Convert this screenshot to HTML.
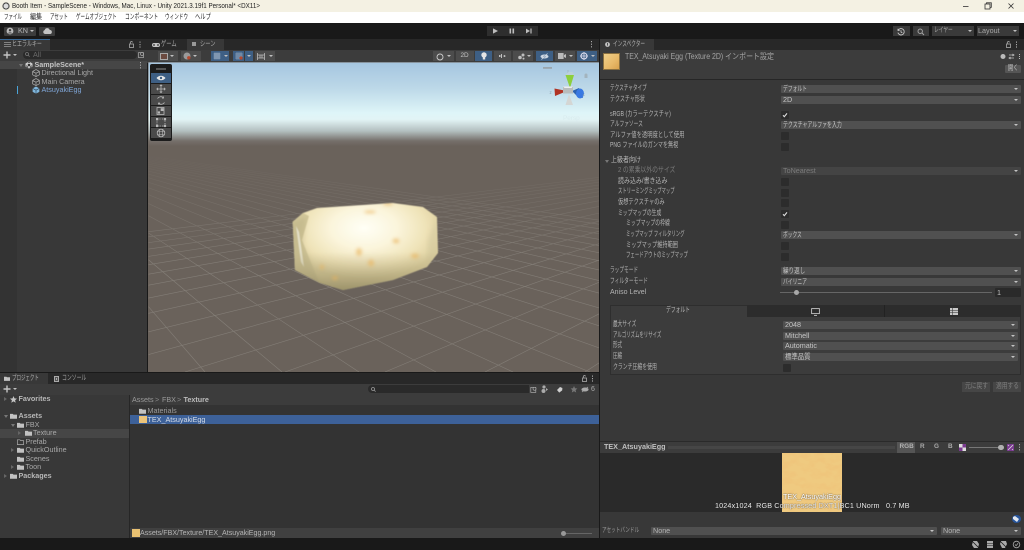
<!DOCTYPE html>
<html><head><meta charset="utf-8"><style>
*{box-sizing:border-box}
html,body{margin:0;padding:0;background:#191919;width:1024px;height:550px;overflow:hidden}
#r{position:relative;width:1024px;height:550px;overflow:hidden;font-family:"Liberation Sans","Noto Sans CJK JP",sans-serif;font-size:7.2px;color:#b4b4b4;filter:blur(.35px)}
.b{position:absolute}
.t{position:absolute;line-height:10px;margin-top:-5px;white-space:nowrap;transform-origin:left center}
.t[style*="scaleX"]{scale:1 1.12}
.j{font-size:6.5px}
.dd{position:absolute;height:8px;background:#505050;border-radius:1px;color:#c6c6c6;line-height:8px;padding-left:2px;white-space:nowrap}
.dd:after{content:"";position:absolute;right:3px;top:3px;border:2px solid transparent;border-top:2.5px solid #c4c4c4;border-bottom:0}
.k{display:inline-block;font-size:6.4px;transform-origin:left center;scale:1 1.12}
.cb{position:absolute;width:8px;height:8px;background:#2c2c2c;border-radius:1px}
.tb{position:absolute;background:#4c4c4c;height:10px;top:51px}
.bl{background:#3e5f84}
.ar{position:absolute;border:2px solid transparent;border-top:2.5px solid #c0c0c0;border-bottom:0}
.tr{position:absolute;border:2.5px solid transparent;border-left:3.5px solid #666;border-right:0}
.td{position:absolute;border:2.5px solid transparent;border-top:3.5px solid #777;border-bottom:0}
.tool{position:absolute;left:151px;width:20px;height:10px;background:#4a4a4a}
svg{position:absolute;overflow:visible}
</style></head><body><div id="r">
<svg width="0" height="0"><defs>
<symbol id="f" viewBox="0 0 10 8"><path d="M0 1h4l1 1h5v6H0z" fill="#c2c2c2"/></symbol>
<symbol id="c" viewBox="0 0 10 10"><path d="M5 .7L9.2 3v4.3L5 9.5.8 7.3V3zM.8 3L5 5.2 9.2 3M5 5.2v4.3" fill="none" stroke="#aaa" stroke-width=".9"/></symbol>
</defs></svg>

<!-- window title / menu -->
<div class="b" style="left:0;top:0;width:1024px;height:12px;background:#f4f1e3"></div>
<div class="b" style="left:0;top:12px;width:1024px;height:10.5px;background:#fff"></div>
<div class="b" style="left:0;top:22.5px;width:1024px;height:.8px;background:#bbb"></div>
<svg style="left:2px;top:2px" width="8" height="8" viewBox="0 0 8 8"><circle cx="4" cy="4" r="3.6" fill="#444"/><path d="M4 1.2L6.4 2.7V5.4L4 6.8 1.6 5.4V2.7z" fill="#ddd"/></svg>
<div class="t" style="left:12px;top:6px;color:#222;font-size:7.1px;transform:scaleX(.885);scale:1 1">Booth Item - SampleScene - Windows, Mac, Linux - Unity 2021.3.19f1 Personal* &lt;DX11&gt;</div>
<div class="t" style="left:3.5px;top:17.5px;color:#222;font-size:6.4px;transform:scaleX(.7)">ファイル</div>
<div class="t" style="left:30px;top:17.5px;color:#222;font-size:6.4px;transform:scaleX(.94)">編集</div>
<div class="t" style="left:50px;top:17.5px;color:#222;font-size:6.4px;transform:scaleX(.7)">アセット</div>
<div class="t" style="left:76px;top:17.5px;color:#222;font-size:6.4px;transform:scaleX(.71)">ゲームオブジェクト</div>
<div class="t" style="left:125px;top:17.5px;color:#222;font-size:6.4px;transform:scaleX(.74)">コンポーネント</div>
<div class="t" style="left:165px;top:17.5px;color:#222;font-size:6.4px;transform:scaleX(.72)">ウィンドウ</div>
<div class="t" style="left:195px;top:17.5px;color:#222;font-size:6.4px;transform:scaleX(.83)">ヘルプ</div>
<svg style="left:960px;top:1px" width="64" height="10" viewBox="0 0 64 10" fill="none" stroke="#333" stroke-width=".8"><path d="M3 5.5h5.5"/><rect x="25" y="3" width="5" height="5"/><path d="M26.5 3V1.8h4.8v4.6H30"/><path d="M48.5 2.5l5 5M53.5 2.5l-5 5"/></svg>

<!-- main toolbar -->
<div class="b" style="left:0;top:23px;width:1024px;height:16px;background:#191919"></div>
<div class="b" style="left:4px;top:26.5px;width:32px;height:9.5px;background:#3c3c3c;border-radius:1px"></div>
<svg style="left:6px;top:27px" width="8" height="8" viewBox="0 0 8 8"><circle cx="4" cy="4" r="3.4" fill="#bbb"/><circle cx="4" cy="3.2" r="1.2" fill="#3c3c3c"/><path d="M1.8 6.4c.6-1.4 3.8-1.4 4.4 0" fill="#3c3c3c"/></svg>
<div class="t" style="left:18px;top:31px;color:#b8b8b8">KN</div>
<div class="ar" style="left:30px;top:30px"></div>
<div class="b" style="left:39px;top:26.5px;width:16px;height:9.5px;background:#3c3c3c;border-radius:1px"></div>
<svg style="left:43px;top:28px" width="9" height="6" viewBox="0 0 9 6"><path d="M2 6a2 2 0 0 1-.3-3.900A2.600 2.600 0 0 1 6.700 2 2 2 0 0 1 7 6z" fill="#c4c4c4"/></svg>

<div class="b" style="left:487px;top:26px;width:16.5px;height:10px;background:#2e2e2e"></div>
<div class="b" style="left:504px;top:26px;width:16.5px;height:10px;background:#2e2e2e"></div>
<div class="b" style="left:521px;top:26px;width:16.5px;height:10px;background:#2e2e2e"></div>
<svg style="left:487px;top:26px" width="50" height="10" viewBox="0 0 50 10" fill="#bdbdbd"><path d="M6 2.4L11 5 6 7.6z"/><rect x="22.5" y="2.5" width="1.6" height="5"/><rect x="25.5" y="2.5" width="1.6" height="5"/><path d="M39 2.6L43 5 39 7.4z"/><rect x="43.4" y="2.5" width="1.2" height="5"/></svg>

<div class="b" style="left:893px;top:26px;width:17px;height:10px;background:#3a3a3a"></div>
<svg style="left:897px;top:27.5px" width="8" height="8" viewBox="0 0 8 8" fill="none" stroke="#c8c8c8" stroke-width=".9"><path d="M1.2 2.2A3.2 3.2 0 1 1 .9 4.6M1 .8v1.6h1.6M4 2.2V4l1.3.9"/></svg>
<div class="b" style="left:913px;top:26px;width:16px;height:10px;background:#3a3a3a"></div>
<svg style="left:917px;top:27.5px" width="8" height="8" viewBox="0 0 8 8" fill="none" stroke="#aaa" stroke-width=".9"><circle cx="3.2" cy="3.2" r="2.2"/><path d="M5 5l2 2"/></svg>
<div class="b" style="left:932px;top:26px;width:42px;height:10px;background:#3a3a3a"></div>
<div class="t" style="left:934px;top:31px;color:#a8a8a8;font-size:6.4px;transform:scaleX(.74)">レイヤー</div>
<div class="ar" style="left:968px;top:30px"></div>
<div class="b" style="left:977px;top:26px;width:42px;height:10px;background:#3a3a3a"></div>
<div class="t" style="left:978px;top:31px;color:#a8a8a8">Layout</div>
<div class="ar" style="left:1013px;top:30px"></div>

<!-- hierarchy -->
<div class="b" style="left:0;top:39px;width:147px;height:10.5px;background:#282828"></div>
<div class="b" style="left:0;top:39px;width:50px;height:10.5px;background:#383838"></div>
<div class="b" style="left:0;top:39px;width:50px;height:.8px;background:#3a6a99"></div>
<div class="b" style="left:0;top:49.5px;width:147px;height:11px;background:#3c3c3c"></div>
<div class="b" style="left:0;top:60.5px;width:147px;height:312px;background:#383838"></div>
<div class="b" style="left:0;top:60.5px;width:17px;height:312px;background:#333"></div>
<div class="b" style="left:0;top:60.5px;width:147px;height:8.5px;background:#464646"></div>
<svg style="left:4px;top:42px" width="7" height="5" viewBox="0 0 7 5" stroke="#999" stroke-width=".8"><path d="M0 .5h7M0 2.5h7M0 4.5h7"/></svg>
<div class="t" style="left:12px;top:44.5px;font-size:6.4px;color:#aaa;transform:scaleX(.78)">ヒエラルキー</div>
<svg style="left:129px;top:41px" width="14" height="7" viewBox="0 0 14 7" fill="none" stroke="#aaa" stroke-width=".8"><rect x="0.5" y="3" width="4" height="3.5"/><path d="M1.3 3V1.6a1.2 1.2 0 0 1 2.3-.3"/><path d="M11 .5v1.2M11 3v1.2M11 5.4v1.2" stroke-width="1"/></svg>
<svg style="left:3px;top:51px" width="8" height="8" viewBox="0 0 8 8" stroke="#c4c4c4" stroke-width="1.4"><path d="M4 .5v7M.5 4h7"/></svg>
<div class="ar" style="left:12.5px;top:53.5px"></div>
<div class="b" style="left:23px;top:50.5px;width:114px;height:8.5px;background:#2a2a2a;border-radius:4px"></div>
<div class="t" style="left:33px;top:55px;color:#6a6a6a">All</div>
<svg style="left:25px;top:52px" width="5" height="5" viewBox="0 0 5 5" fill="none" stroke="#777" stroke-width=".8"><circle cx="2" cy="2" r="1.5"/><path d="M3 3l1.6 1.6"/></svg>
<svg style="left:138px;top:51px" width="7" height="7" viewBox="0 0 7 7" fill="none" stroke="#aaa" stroke-width=".7"><rect x=".5" y="1.6" width="5" height="5"/><circle cx="4" cy="3" r="1.5" fill="#3c3c3c"/></svg>
<div class="td" style="left:19px;top:63.5px"></div>
<svg style="left:25px;top:60.5px" width="8" height="8" viewBox="0 0 8 8"><path d="M4 .5L7.5 2.5V5.5L4 7.5.5 5.5V2.5z" fill="#ccc"/><circle cx="4" cy="4" r="1.3" fill="#333"/><path d="M1.3 4.6L3 6.5M6.7 4.6L5 6.5M3 1.4h2" stroke="#333" stroke-width=".8"/></svg>
<div class="t" style="left:34.5px;top:64.5px;font-weight:bold;color:#c4c4c4;font-size:7.2px">SampleScene*</div>
<svg style="left:139px;top:61.5px" width="3" height="7" fill="#aaa"><rect x="1" y="0" width="1" height="1.2"/><rect x="1" y="2.6" width="1" height="1.2"/><rect x="1" y="5.2" width="1" height="1.2"/></svg>
<svg style="left:32px;top:69px" width="8" height="8"><use href="#c"/></svg>
<svg style="left:32px;top:77.5px" width="8" height="8"><use href="#c"/></svg>
<svg style="left:32px;top:86px" width="8" height="8" viewBox="0 0 10 10"><path d="M5 .7L9.2 3v4.3L5 9.5.8 7.3V3z" fill="#7fb6dc"/><path d="M.8 3L5 5.2 9.2 3M5 5.2v4.3" fill="none" stroke="#234" stroke-width=".7"/></svg>
<div class="t" style="left:41.5px;top:73px;color:#a8a8a8">Directional Light</div>
<div class="t" style="left:41.5px;top:81.5px;color:#a8a8a8">Main Camera</div>
<div class="t" style="left:41.5px;top:90px;color:#7fa5d6">AtsuyakiEgg</div>
<div class="b" style="left:17px;top:86px;width:.9px;height:8px;background:#4aa4d8"></div>

<!-- scene -->
<div class="b" style="left:147px;top:39px;width:453px;height:10.5px;background:#282828"></div>
<div class="b" style="left:187px;top:39px;width:37px;height:10.5px;background:#383838"></div>
<svg style="left:152px;top:42.5px" width="8" height="4" viewBox="0 0 8 4"><rect width="8" height="4" rx="2" fill="#c4c4c4"/><circle cx="2" cy="2" r=".9" fill="#333"/><circle cx="6" cy="2" r=".9" fill="#333"/></svg>
<div class="t" style="left:161px;top:44.5px;font-size:6.4px;color:#aaa;transform:scaleX(.82)">ゲーム</div>
<div class="b" style="left:191.5px;top:41.5px;width:4.5px;height:4.5px;background:#999"></div>
<div class="t" style="left:200px;top:44.5px;font-size:6.4px;color:#aaa;transform:scaleX(.82)">シーン</div>
<svg style="left:590px;top:41px" width="3" height="7" fill="#aaa"><rect x="1" y="0" width="1" height="1.2"/><rect x="1" y="2.6" width="1" height="1.2"/><rect x="1" y="5.2" width="1" height="1.2"/></svg>
<div class="b" style="left:147px;top:49.5px;width:453px;height:13px;background:#3c3c3c"></div>

<div class="tb" style="left:158px;width:20px"></div><div class="b" style="left:160px;top:52.5px;width:7.5px;height:7.5px;background:#6b4a40;border:.8px solid #aaa"></div><div class="ar" style="left:170px;top:55px"></div>
<div class="tb" style="left:181px;width:19.5px"></div><svg style="left:183px;top:52px" width="8" height="8" viewBox="0 0 8 8"><circle cx="4" cy="4" r="3.5" fill="#9a9a9a"/><circle cx="5.8" cy="5.8" r="1.7" fill="#b5482e"/></svg><div class="ar" style="left:193px;top:55px"></div>
<div class="tb bl" style="left:211px;width:10.5px"></div><div class="tb bl" style="left:222px;width:6.5px"></div>
<svg style="left:212.5px;top:52px" width="8" height="8" viewBox="0 0 8 8" stroke="#c8d4e0" stroke-width=".6" fill="none"><path d="M2 .5v7M4 .5v7M6 .5v7M.5 2h7M.5 4h7M.5 6h7"/></svg><div class="ar" style="left:223.5px;top:55px"></div>
<div class="tb bl" style="left:233px;width:11px"></div><div class="tb bl" style="left:245px;width:8px"></div>
<svg style="left:234.5px;top:52px" width="8" height="8" viewBox="0 0 8 8" stroke="#c8d4e0" stroke-width=".7" fill="none" stroke-dasharray="1 1"><path d="M2 .5v7M4 .5v7M6 .5v7M.5 2h7M.5 4h7M.5 6h7"/><circle cx="6" cy="6" r="1.6" fill="#b5482e" stroke="none"/></svg><div class="ar" style="left:247px;top:55px"></div>
<div class="tb" style="left:255px;width:20px"></div><svg style="left:257px;top:52.5px" width="8" height="7" viewBox="0 0 8 7" stroke="#bbb" stroke-width=".8" fill="none"><path d="M.5 0v7M7.5 0v7M.5 2h7M.5 5h7M3 2v3M5 2v3"/></svg><div class="ar" style="left:269px;top:55px"></div>

<div class="tb" style="left:433px;width:21px"></div><svg style="left:436px;top:52.5px" width="8" height="8" viewBox="0 0 8 8" fill="none" stroke="#ccc" stroke-width=".9"><circle cx="4" cy="4" r="3"/></svg><div class="ar" style="left:447px;top:55px"></div>
<div class="tb" style="left:456px;width:17.5px"></div><div class="t" style="left:460.5px;top:56px;font-size:6.4px;color:#c4c4c4">2D</div>
<div class="tb bl" style="left:475px;width:17px"></div><svg style="left:480.5px;top:52px" width="6" height="8" viewBox="0 0 6 8" fill="#e4e4e4"><circle cx="3" cy="3" r="2.7"/><rect x="1.8" y="5.5" width="2.4" height="2"/></svg>
<div class="tb" style="left:494px;width:16.5px"></div><svg style="left:499px;top:53px" width="7" height="6" viewBox="0 0 7 6" fill="#c0c0c0"><path d="M0 2h1.5V4H0zM2 1h1v4H2zM4.500 3a1 1 0 1 1 0 .1z"/></svg>
<div class="tb" style="left:513px;width:20px"></div><svg style="left:518px;top:52.5px" width="7" height="7" viewBox="0 0 7 7" fill="#bdbdbd"><circle cx="2" cy="4.5" r="1.8"/><circle cx="5" cy="2" r="1.5"/><circle cx="5.5" cy="5.6" r="1"/></svg><div class="ar" style="left:527px;top:55px"></div>
<div class="tb bl" style="left:536px;width:17px"></div><svg style="left:540px;top:52.5px" width="9" height="7" viewBox="0 0 9 7" fill="#cfd8e2"><ellipse cx="4.5" cy="3.5" rx="4" ry="2"/><circle cx="4.5" cy="3.5" r="1" fill="#3e5f84"/><path d="M1.5 6.5l6-6" stroke="#cfd8e2" stroke-width=".8"/></svg>
<div class="tb" style="left:555px;width:20px"></div><svg style="left:557.5px;top:53px" width="8" height="6" viewBox="0 0 8 6" fill="#bbb"><rect width="5.6" height="6"/><path d="M6 2l2-1v4L6 4z"/></svg><div class="ar" style="left:568.5px;top:55px"></div>
<div class="tb bl" style="left:577px;width:20px"></div><svg style="left:580px;top:52px" width="8" height="8" viewBox="0 0 8 8"><circle cx="4" cy="4" r="3" fill="none" stroke="#dde" stroke-width="1.1"/><path d="M4 0v8M0 4h8" stroke="#dde" stroke-width=".8"/></svg><div class="ar" style="left:590.5px;top:55px"></div>

<svg style="left:0;top:0" width="1024" height="550" viewBox="0 0 1024 550">
<defs>
<clipPath id="sc"><rect x="148.5" y="62.5" width="451" height="310"/></clipPath>
<linearGradient id="sky" x1="0" y1="63" x2="0" y2="146" gradientUnits="userSpaceOnUse">
<stop offset="0" stop-color="#a6c6e0"/><stop offset=".3" stop-color="#bcd8e8"/><stop offset=".6" stop-color="#def5f8"/><stop offset=".68" stop-color="#e2f4f5"/><stop offset=".82" stop-color="#b3bfbf"/><stop offset=".94" stop-color="#756f6a"/><stop offset="1" stop-color="#6a625b"/></linearGradient>
<linearGradient id="gf" x1="0" y1="150" x2="0" y2="265" gradientUnits="userSpaceOnUse"><stop offset="0" stop-color="#000"/><stop offset="1" stop-color="#fff"/></linearGradient>
<mask id="gm" maskUnits="userSpaceOnUse" x="148" y="140" width="452" height="235"><rect x="148" y="140" width="452" height="235" fill="url(#gf)"/></mask>
<radialGradient id="eg" gradientUnits="userSpaceOnUse" cx="364" cy="228" r="82" gradientTransform="translate(364 228) scale(1 .62) translate(-364 -228)">
<stop offset="0" stop-color="#fffff6"/><stop offset=".4" stop-color="#fbf5dc"/><stop offset=".75" stop-color="#efe3b8"/><stop offset="1" stop-color="#dccf9e"/></radialGradient>
<linearGradient id="eb" x1="0" y1="252" x2="0" y2="292" gradientUnits="userSpaceOnUse"><stop offset="0" stop-color="#b3a67c" stop-opacity="0"/><stop offset="1" stop-color="#8f8760" stop-opacity=".9"/></linearGradient>
<filter id="bl"><feGaussianBlur stdDeviation="1.5"/></filter>
<filter id="bl1"><feGaussianBlur stdDeviation="2"/></filter>
<filter id="bl0"><feGaussianBlur stdDeviation=".6"/></filter>
<clipPath id="ec"><path d="M292.7 221.7L303 213 317 208 393 203 423 207 437 217 438 253 427 267 393 280 343 290 320 283 295 270z"/></clipPath>
</defs>
<rect x="148" y="62" width="452" height="311" fill="#6a625b"/>
<g clip-path="url(#sc)"><g mask="url(#gm)" stroke="#8a857e" stroke-width=".6" fill="none" opacity=".8">
<path d="M950 135L885 372M950 135L785 372M950 135L685 372M950 135L585 372M950 135L485 372M950 135L385 372M950 135L285 372M950 135L185 372M950 135L85 372M950 135L-15 372M950 135L-115 372M950 135L-215 372M950 135L-315 372M950 135L-415 372M950 135L-515 372M950 135L-615 372M950 135L-715 372M950 135L-815 372M950 135L-915 372M950 135L-1015 372"/>
<path d="M0 135L205 372M0 135L282 372M0 135L359 372M0 135L436 372M0 135L513 372M0 135L590 372M0 135L667 372M0 135L744 372M0 135L821 372M0 135L898 372M0 135L975 372M0 135L1052 372M0 135L1129 372M0 135L1206 372M0 135L1283 372M0 135L1360 372M0 135L1437 372M0 135L1514 372M0 135L1591 372M0 135L1668 372M0 135L128 372"/>
</g></g>
<rect x="148.5" y="62.5" width="451" height="84" fill="url(#sky)"/>
<!-- egg -->
<g filter="url(#bl0)"><g clip-path="url(#ec)">
<rect x="288" y="200" width="155" height="95" fill="url(#eg)"/>
<path d="M292 270L292 222 303 213 309 216 302 240 320 285 295 272z" fill="#d2c79a"/>
<path d="M296 226L301 262 304 267 299 232z" fill="#faf8e8"/>
<path d="M306 217L303 245 319 282 336 292 300 292 290 270 291 222z" fill="#a89f72" opacity=".28" filter="url(#bl1)"/>
<path d="M437 217L438 253 427 267 428 240z" fill="#cfc59c" opacity=".45" filter="url(#bl1)"/>
<rect x="290" y="252" width="150" height="42" fill="url(#eb)"/>
<g fill="#eab35c" filter="url(#bl)" opacity=".6">
<ellipse cx="396" cy="241" rx="3.5" ry="2.5"/><ellipse cx="359" cy="252" rx="3" ry="4"/><ellipse cx="371" cy="263" rx="3" ry="3.5"/><ellipse cx="415" cy="256" rx="4" ry="2.5"/><ellipse cx="335" cy="278" rx="3" ry="2"/><ellipse cx="322" cy="267" rx="2" ry="2.5"/><ellipse cx="370" cy="212" rx="6" ry="1.5"/><ellipse cx="388" cy="204" rx="5" ry="1.5"/></g>
</g></g>
<!-- gizmo -->
<rect x="543" y="67" width="9" height="1.8" fill="#9aa5ad"/>
<path d="M584.5 78v-3a1.5 1.5 0 0 1 3 0v3z" fill="#a3b4be"/>
<path d="M565.5 75L574 75 570 88z" fill="#8ccf3c"/><path d="M566 75h8l-1.5-3h-5z" fill="#c6d2d6" opacity=".6"/>
<path d="M554.5 88.5L555 96 567 91z" fill="#b03324"/>
<path d="M572 91L579 88 583 98 578 97z" fill="#2c62b0"/><ellipse cx="580" cy="93.5" rx="4" ry="5" fill="#3878e2"/>
<path d="M565.5 105L573 105 569 94z" fill="#d4d6d4"/>
<rect x="563" y="86.5" width="10" height="7" fill="#b9bcbc"/>
<path d="M563 86.5h10l-1.5 1.5h-7z" fill="#eceeee"/>
<text x="567" y="72" font-size="4" fill="#9fb2bc" font-family="Liberation Sans">y</text>
<text x="582.5" y="96" font-size="4.5" fill="#8aa2ae" font-family="Liberation Sans">x</text>
<text x="549.5" y="94" font-size="4.5" fill="#8aa2ae" font-family="Liberation Sans">z</text>
<text x="563" y="120" font-size="6.4" fill="#d8ebee" font-family="Liberation Sans">Persp</text>
</svg>

<!-- tools overlay -->
<div class="b" style="left:150px;top:64px;width:22px;height:77px;background:#1c1c1c;border-radius:2px"></div>
<div class="b" style="left:156px;top:67.5px;width:10px;height:2px;background:#555"></div>
<div class="tool" style="top:73px;background:#3e5f84"></div>
<div class="tool" style="top:84px"></div><div class="tool" style="top:95px"></div><div class="tool" style="top:106px"></div><div class="tool" style="top:117px"></div><div class="tool" style="top:128px"></div>
<svg style="left:151px;top:73px" width="20" height="66" viewBox="0 0 20 66" fill="none" stroke="#b8b8b8" stroke-width=".8">
<path d="M5.5 5C8 2 12 2 14.5 5 12 8 8 8 5.5 5z" fill="#e8e8e8" stroke="none"/><circle cx="10" cy="5" r="1.2" fill="#3e5f84" stroke="none"/>
<path d="M10 12v7.5M6.2 16h7.6M8.8 13l1.2-1.2 1.2 1.2M8.8 18.5l1.2 1.2 1.2-1.2M7 14.8L5.800 16 7 17.2M13 14.8l1.2 1.2-1.2 1.2"/>
<path d="M6.5 25.5a4 4 0 0 1 6-.8M13.5 29.5a4 4 0 0 1-6 .8M12.5 23.5v1.6H11M7.5 31.5v-1.5H9"/>
<rect x="6" y="34.5" width="7" height="7"/><rect x="9.7" y="35.2" width="2.8" height="2.8" fill="#b8b8b8" stroke="none"/><rect x="6.8" y="38.4" width="2.2" height="2.2" fill="#b8b8b8" stroke="none"/>
<path d="M6 46h8v7H6z" stroke-dasharray="1.2 1.2"/><rect x="5.4" y="45.4" width="1.5" height="1.5" fill="#b8b8b8"/><rect x="13.2" y="45.4" width="1.5" height="1.5" fill="#b8b8b8"/><rect x="5.4" y="52.2" width="1.5" height="1.5" fill="#b8b8b8"/><rect x="13.2" y="52.2" width="1.5" height="1.5" fill="#b8b8b8"/>
<circle cx="10" cy="60" r="3.800"/><path d="M6.200 58.500h7.600M6.200 61.500h7.600M8.500 56.300v7.400M11.500 56.300v7.400" stroke-width=".6"/>
</svg>

<!-- inspector -->
<div class="b" style="left:600px;top:39px;width:424px;height:10.5px;background:#282828"></div>
<div class="b" style="left:600px;top:39px;width:54px;height:10.5px;background:#383838"></div>
<div class="b" style="left:600px;top:49.5px;width:424px;height:29px;background:#3c3c3c"></div>
<div class="b" style="left:600px;top:78.5px;width:424px;height:1px;background:#262626"></div>
<div class="b" style="left:600px;top:79.5px;width:424px;height:361px;background:#383838"></div>
<div class="b" style="left:599px;top:39px;width:1px;height:499px;background:#191919"></div>
<svg style="left:605px;top:41.5px" width="5" height="5" viewBox="0 0 5 5"><circle cx="2.5" cy="2.5" r="2.4" fill="#c4c4c4"/><rect x="2.1" y="1" width=".8" height="2.6" fill="#333"/></svg>
<div class="t" style="left:613px;top:44.5px;font-size:6.4px;color:#b0b0b0;transform:scaleX(.73)">インスペクター</div>
<svg style="left:1006px;top:41px" width="14" height="7" viewBox="0 0 14 7" fill="none" stroke="#aaa" stroke-width=".8"><rect x="0.5" y="3" width="4" height="3.5"/><path d="M1.3 3V1.6a1.2 1.2 0 0 1 2.3-.3"/><path d="M10.5 .5v1.2M10.5 3v1.2M10.5 5.4v1.2" stroke-width="1"/></svg>
<div class="b" style="left:603px;top:53px;width:17px;height:17px;background:linear-gradient(135deg,#f0d08a,#e8b968 60%,#d9a24e);border:.5px solid #8a7040"></div>
<div class="t" style="left:625px;top:56.5px;color:#a4a4a4;font-size:8px;transform:scaleX(.87);scale:1 1">TEX_Atsuyaki Egg (Texture 2D) インポート設定</div>
<svg style="left:1000px;top:52.5px" width="21" height="7" viewBox="0 0 21 7" fill="none" stroke="#bbb" stroke-width=".8"><circle cx="3" cy="3.5" r="2.5" fill="#bbb" stroke="none"/><path d="M9 2h5M12.5 1l1.5 1-1.5 1M14 5H9M10.5 4L9 5l1.5 1"/><path d="M19.5 1v1M19.5 3v1M19.5 5v1" stroke-width="1"/></svg>
<div class="b" style="left:1005px;top:65px;width:16px;height:7.5px;background:#555;border-radius:1px"></div>
<div class="t" style="left:1008px;top:68.7px;font-size:6.4px;color:#c4c4c4;transform:scaleX(.8)">開く</div>

<div class="t j" style="left:610px;top:88.5px;transform:scaleX(.71)">テクスチャタイプ</div><div class="dd" style="left:781px;top:85px;width:240px"><span class="k" style="transform:scaleX(.75)">デフォルト</span></div>
<div class="t j" style="left:610px;top:99.5px;transform:scaleX(.77)">テクスチャ形状</div><div class="dd" style="left:781px;top:96px;width:240px">2D</div>
<div class="t j" style="left:610px;top:114.5px;transform:scaleX(.81)">sRGB (カラーテクスチャ)</div><div class="cb" style="left:780.5px;top:111px"></div>
<svg style="left:780.5px;top:111px" width="8" height="8" viewBox="0 0 8 8" fill="none" stroke="#e0e0e0" stroke-width="1.1"><path d="M2 4.3l1.3 1.4L6 2.4"/></svg>
<div class="t j" style="left:610px;top:125px;transform:scaleX(.73)">アルファソース</div><div class="dd" style="left:781px;top:121px;width:240px"><span class="k" style="transform:scaleX(.77)">テクスチャアルファを入力</span></div>
<div class="t j" style="left:610px;top:135.5px;transform:scaleX(.82)">アルファ値を透明度として使用</div><div class="cb" style="left:780.5px;top:132px"></div>
<div class="t j" style="left:610px;top:146px;transform:scaleX(.78)">PNG ファイルのガンマを無視</div><div class="cb" style="left:780.5px;top:142.5px"></div>

<div class="td" style="left:604.5px;top:159.5px"></div>
<div class="t j" style="left:611px;top:160.5px;color:#bcbcbc;transform:scaleX(.92)">上級者向け</div>
<div class="t j" style="left:618px;top:171px;color:#7c7c7c;transform:scaleX(.9)">2 の累乗以外のサイズ</div><div class="dd" style="left:781px;top:167px;width:240px;background:#444;color:#7c7c7c">ToNearest</div>
<div class="t j" style="left:618px;top:181.5px;transform:scaleX(.92)">読み込み/書き込み</div><div class="cb" style="left:780.5px;top:178px"></div>
<div class="t j" style="left:618px;top:192px;transform:scaleX(.67)">ストリーミングミップマップ</div><div class="cb" style="left:780.5px;top:188.5px"></div>
<div class="t j" style="left:618px;top:203px;transform:scaleX(.8)">仮想テクスチャのみ</div><div class="cb" style="left:780.5px;top:199px"></div>
<div class="t j" style="left:618px;top:213.5px;transform:scaleX(.74)">ミップマップの生成</div><div class="cb" style="left:780.5px;top:210px"></div>
<svg style="left:780.5px;top:210px" width="8" height="8" viewBox="0 0 8 8" fill="none" stroke="#e0e0e0" stroke-width="1.1"><path d="M2 4.3l1.3 1.4L6 2.4"/></svg>
<div class="t j" style="left:626px;top:224px;transform:scaleX(.75)">ミップマップの枠線</div><div class="cb" style="left:780.5px;top:220.5px"></div>
<div class="t j" style="left:626px;top:235px;transform:scaleX(.68)">ミップマップ フィルタリング</div><div class="dd" style="left:781px;top:231px;width:240px"><span class="k" style="transform:scaleX(.74)">ボックス</span></div>
<div class="t j" style="left:626px;top:245.5px;transform:scaleX(.8)">ミップマップ維持範囲</div><div class="cb" style="left:780.5px;top:241.5px"></div>
<div class="t j" style="left:626px;top:256px;transform:scaleX(.68)">フェードアウトのミップマップ</div><div class="cb" style="left:780.5px;top:252.5px"></div>
<div class="t j" style="left:610px;top:271px;transform:scaleX(.72)">ラップモード</div><div class="dd" style="left:781px;top:267px;width:240px"><span class="k" style="transform:scaleX(.87)">繰り返し</span></div>
<div class="t j" style="left:610px;top:281.5px;transform:scaleX(.73)">フィルターモード</div><div class="dd" style="left:781px;top:278px;width:240px"><span class="k" style="transform:scaleX(.75)">バイリニア</span></div>
<div class="t" style="left:610px;top:292.5px;font-size:7px">Aniso Level</div>
<div class="b" style="left:780px;top:292px;width:212px;height:1px;background:#666"></div>
<div class="b" style="left:793.5px;top:290px;width:5px;height:5px;border-radius:50%;background:#a8a8a8"></div>
<div class="b" style="left:995px;top:288px;width:26px;height:9px;background:#2a2a2a;border-radius:1px"></div>
<div class="t" style="left:997px;top:292.5px;color:#c0c0c0">1</div>

<!-- platform box -->
<div class="b" style="left:610px;top:305px;width:411px;height:70px;background:#3c3c3c;border:.7px solid #2e2e2e"></div>
<div class="b" style="left:747px;top:305px;width:137px;height:12px;background:#2c2c2c"></div>
<div class="b" style="left:884px;top:305px;width:137px;height:12px;background:#2c2c2c;border-left:.7px solid #222"></div>
<div class="t" style="left:666px;top:311px;font-size:6.4px;color:#bbb;transform:scaleX(.75)">デフォルト</div>
<svg style="left:811px;top:307.5px" width="9" height="8" viewBox="0 0 9 8" fill="none" stroke="#c4c4c4" stroke-width=".9"><rect x=".6" y=".6" width="7.8" height="5"/><path d="M3 7.4h3"/></svg>
<svg style="left:949.5px;top:307.5px" width="8" height="7" viewBox="0 0 8 7" fill="#c8c8c8"><rect width="8" height="2"/><rect y="2.5" width="8" height="2"/><rect y="5" width="8" height="2"/><rect x="2.2" width=".6" height="7" fill="#3c3c3c"/></svg>
<div class="t j" style="left:613px;top:325px;transform:scaleX(.72)">最大サイズ</div><div class="dd" style="left:783px;top:321px;width:235px">2048</div>
<div class="t j" style="left:613px;top:335.5px;transform:scaleX(.68)">アルゴリズムをリサイズ</div><div class="dd" style="left:783px;top:332px;width:235px">Mitchell</div>
<div class="t j" style="left:613px;top:346px;transform:scaleX(.7)">形式</div><div class="dd" style="left:783px;top:342px;width:235px">Automatic</div>
<div class="t j" style="left:613px;top:357px;transform:scaleX(.7)">圧縮</div><div class="dd" style="left:783px;top:353px;width:235px"><span class="k">標準品質</span></div>
<div class="t j" style="left:613px;top:367.5px;transform:scaleX(.75)">クランチ圧縮を使用</div><div class="cb" style="left:783px;top:364px"></div>
<div class="b" style="left:962px;top:382px;width:28px;height:10px;background:#464646"></div>
<div class="t" style="left:964.5px;top:387px;font-size:6.4px;color:#7e7e7e;transform:scaleX(.9)">元に戻す</div>
<div class="b" style="left:993px;top:382px;width:28px;height:10px;background:#464646"></div>
<div class="t" style="left:995.5px;top:387px;font-size:6.4px;color:#7e7e7e;transform:scaleX(.9)">適用する</div>

<!-- preview -->
<div class="b" style="left:600px;top:441px;width:424px;height:12px;background:#3c3c3c;border-top:.7px solid #2a2a2a"></div>
<div class="t" style="left:604px;top:447px;font-weight:bold;color:#c0c0c0;font-size:7.2px">TEX_AtsuyakiEgg</div>
<div class="b" style="left:668px;top:445.5px;width:227px;height:3px;background:#464646"></div>
<div class="b" style="left:897px;top:441.5px;width:17.5px;height:11px;background:#555"></div>
<div class="t" style="left:899.5px;top:447px;font-weight:bold;font-size:6.4px;color:#b4b4b4">RGB</div>
<div class="t" style="left:920px;top:447px;font-weight:bold;font-size:6.4px;color:#aaa">R</div>
<div class="t" style="left:934px;top:447px;font-weight:bold;font-size:6.4px;color:#aaa">G</div>
<div class="t" style="left:948px;top:447px;font-weight:bold;font-size:6.4px;color:#aaa">B</div>
<div class="b" style="left:959px;top:443.5px;width:7px;height:7px;background:conic-gradient(#7a3a90 25%,#ddd 25% 50%,#7a3a90 50% 75%,#ddd 75%)"></div>
<div class="b" style="left:969px;top:446.8px;width:33px;height:1px;background:#777"></div>
<div class="b" style="left:998px;top:444.5px;width:5.5px;height:5.5px;border-radius:50%;background:#b0b0b0"></div>
<div class="b" style="left:1007px;top:443.5px;width:7px;height:7px;background:#7a3a90"></div>
<svg style="left:1007px;top:443.5px" width="7" height="7" stroke="#ddd" stroke-width=".8"><path d="M6 1L1 6M2 1l-1 1M6 5L5 6"/></svg>
<svg style="left:1018px;top:444px" width="3" height="7" fill="#aaa"><rect x="1" y="0" width="1" height="1.2"/><rect x="1" y="2.6" width="1" height="1.2"/><rect x="1" y="5.2" width="1" height="1.2"/></svg>
<div class="b" style="left:600px;top:453px;width:424px;height:59px;background:#2a2a2a"></div>
<svg style="left:782px;top:453px" width="60" height="59" viewBox="0 0 60 59">
<defs><filter id="tx" x="0" y="0" width="100%" height="100%"><feTurbulence type="fractalNoise" baseFrequency=".09 .16" numOctaves="3" seed="7"/><feColorMatrix values="0 0 0 0 .86  0 0 0 0 .56  0 0 0 0 .2  3.5 0 0 0 -1.4"/></filter></defs>
<rect width="60" height="59" fill="#efca80"/><rect width="60" height="59" filter="url(#tx)"/>
</svg>
<div class="t" style="left:782px;top:497px;width:60px;text-align:center;font-size:7.2px;color:#fff;text-shadow:0 0 1.2px #222">TEX_AtsuyakiEgg</div>
<div class="t" style="left:715px;top:505.5px;font-size:7.2px;color:#e8e8e8;text-shadow:0 0 1px #222;letter-spacing:.02em">1024x1024&nbsp; RGB Compressed DXT1|BC1 UNorm &nbsp; 0.7 MB</div>
<div class="b" style="left:600px;top:512px;width:424px;height:13px;background:#383838"></div>
<div class="b" style="left:600px;top:525px;width:424px;height:13px;background:#383838"></div>
<div class="b" style="left:1012px;top:515px;width:8.5px;height:8px;border-radius:50%;background:#27549a"></div>
<svg style="left:1013px;top:516px" width="6" height="6" viewBox="0 0 6 6"><path d="M0 1l2-1 4 3-2 3-4-3z" fill="#e0e6ee"/></svg>
<div class="t" style="left:602px;top:531px;font-size:6px;color:#9a9a9a;transform:scaleX(.77)">アセットバンドル</div>
<div class="dd" style="left:651px;top:527px;width:286px;color:#b4b4b4">None</div>
<div class="dd" style="left:941px;top:527px;width:80px;color:#b4b4b4">None</div>

<!-- project -->
<div class="b" style="left:0;top:372px;width:599px;height:1px;background:#191919"></div>
<div class="b" style="left:0;top:373px;width:599px;height:11px;background:#282828"></div>
<div class="b" style="left:0;top:373px;width:48px;height:11px;background:#383838"></div>
<div class="b" style="left:0;top:384px;width:599px;height:10.5px;background:#3c3c3c"></div>
<div class="b" style="left:0;top:394.5px;width:129px;height:143.5px;background:#383838"></div>
<div class="b" style="left:129px;top:394.5px;width:1px;height:143.5px;background:#262626"></div>
<div class="b" style="left:130px;top:394.5px;width:469px;height:10.5px;background:#3c3c3c"></div>
<div class="b" style="left:130px;top:405px;width:469px;height:123px;background:#333"></div>
<div class="b" style="left:130px;top:528px;width:469px;height:10px;background:#404040"></div>
<div class="b" style="left:130px;top:415px;width:469px;height:8.5px;background:#3d6199"></div>
<div class="b" style="left:0;top:429px;width:129px;height:8.5px;background:#464646"></div>
<svg style="left:4px;top:376px" width="6" height="5"><use href="#f"/></svg>
<div class="t" style="left:12px;top:379px;font-size:6.4px;color:#b0b0b0;transform:scaleX(.7)">プロジェクト</div>
<div class="b" style="left:54px;top:376px;width:5px;height:5.5px;background:#aaa;border:.8px solid #aaa;box-shadow:inset 0 0 0 1px #555"></div>
<div class="t" style="left:61.5px;top:379px;font-size:6.4px;color:#a0a0a0;transform:scaleX(.76)">コンソール</div>
<svg style="left:582px;top:375px" width="14" height="7" viewBox="0 0 14 7" fill="none" stroke="#aaa" stroke-width=".8"><rect x="0.5" y="3" width="4" height="3.5"/><path d="M1.3 3V1.6a1.2 1.2 0 0 1 2.3-.3"/><path d="M10.5 .5v1.2M10.5 3v1.2M10.5 5.4v1.2" stroke-width="1"/></svg>
<svg style="left:3px;top:385px" width="8" height="8" viewBox="0 0 8 8" stroke="#c4c4c4" stroke-width="1.4"><path d="M4 .5v7M.5 4h7"/></svg>
<div class="ar" style="left:12.5px;top:388px"></div>
<div class="b" style="left:368px;top:385px;width:161px;height:8px;background:#2a2a2a;border-radius:4px 0 0 4px"></div>
<svg style="left:371px;top:386.5px" width="5" height="5" viewBox="0 0 5 5" fill="none" stroke="#999" stroke-width=".8"><circle cx="2" cy="2" r="1.5"/><path d="M3 3l1.6 1.6"/></svg>
<svg style="left:530px;top:385px" width="68" height="9" viewBox="0 0 68 9" fill="#aaa"><rect x=".8" y="2.4" width="5" height="5" fill="none" stroke="#aaa" stroke-width=".7"/><circle cx="4.5" cy="3.8" r="1.5" fill="#3c3c3c" stroke="#aaa" stroke-width=".7"/><circle cx="14" cy="2" r="1.6"/><circle cx="13.5" cy="6" r="2"/><path d="M16 3l2 1.5-2 1.5z"/><path d="M27 5l3-3 2.4 1-.2 2.4-3 2.2z" fill="#cfcfcf"/><path d="M44 1l1 2.3 2.4.2-1.8 1.6.6 2.4L44 6.2l-2.2 1.3.6-2.4L40.6 3.5l2.4-.2z" fill="#777"/><ellipse cx="55" cy="4.5" rx="3.6" ry="2"/><path d="M52 7l6-5" stroke="#aaa" stroke-width=".8"/></svg>
<div class="t" style="left:591px;top:389.5px;font-size:7px;color:#aaa">6</div>

<div class="tr" style="left:4px;top:397px"></div>
<svg style="left:10px;top:395.5px" width="7" height="7" viewBox="0 0 7 7" fill="#c4c4c4"><path d="M3.5 0l1 2.4 2.5.2-1.900 1.600.6 2.500-2.200-1.300-2.200 1.300.6-2.500L0 2.600l2.500-.2z"/></svg>
<div class="t" style="left:18.5px;top:399px;font-weight:bold;color:#b8b8b8;font-size:7.2px">Favorites</div>
<div class="td" style="left:3.5px;top:415px"></div>
<svg style="left:10px;top:413px" width="7" height="6"><use href="#f"/></svg>
<div class="t" style="left:18.5px;top:416px;font-weight:bold;color:#b8b8b8;font-size:7.2px">Assets</div>
<div class="td" style="left:10.5px;top:423.5px"></div>
<svg style="left:17px;top:421.5px" width="7" height="6"><use href="#f"/></svg>
<div class="t" style="left:25.5px;top:424.5px;color:#a8a8a8">FBX</div>
<div class="tr" style="left:18px;top:430.5px"></div>
<svg style="left:24.5px;top:430px" width="7" height="6"><use href="#f"/></svg>
<div class="t" style="left:33px;top:433px;color:#a8a8a8">Texture</div>
<svg style="left:17px;top:438.5px" width="7" height="6" viewBox="0 0 7 6" fill="none" stroke="#aaa" stroke-width=".7"><path d="M.4.8h2.500l.8.8h2.900v4H.4z"/></svg>
<div class="t" style="left:25.5px;top:441.5px;color:#a8a8a8">Prefab</div>
<div class="tr" style="left:10.5px;top:447.5px"></div>
<svg style="left:17px;top:447px" width="7" height="6"><use href="#f"/></svg>
<div class="t" style="left:25.5px;top:450px;color:#a8a8a8">QuickOutline</div>
<svg style="left:17px;top:455.5px" width="7" height="6"><use href="#f"/></svg>
<div class="t" style="left:25.5px;top:458.5px;color:#a8a8a8">Scenes</div>
<div class="tr" style="left:10.5px;top:464.5px"></div>
<svg style="left:17px;top:464px" width="7" height="6"><use href="#f"/></svg>
<div class="t" style="left:25.5px;top:467px;color:#a8a8a8">Toon</div>
<div class="tr" style="left:4px;top:473.5px"></div>
<svg style="left:10px;top:473px" width="7" height="6"><use href="#f"/></svg>
<div class="t" style="left:18.5px;top:476px;font-weight:bold;color:#b8b8b8;font-size:7.2px">Packages</div>

<div class="t" style="left:132px;top:400px;color:#9a9a9a;font-size:7.2px">Assets</div>
<div class="t" style="left:155px;top:400px;color:#8a8a8a">&gt;</div>
<div class="t" style="left:162px;top:400px;color:#9a9a9a;font-size:7.2px">FBX</div>
<div class="t" style="left:177px;top:400px;color:#8a8a8a">&gt;</div>
<div class="t" style="left:183.5px;top:400px;font-weight:bold;color:#bcbcbc;font-size:7.2px">Texture</div>
<svg style="left:139px;top:407.5px" width="7" height="6"><use href="#f"/></svg>
<div class="t" style="left:147.5px;top:410.5px;color:#9c9c9c;font-size:7.2px">Materials</div>
<div class="b" style="left:138.5px;top:415.5px;width:8px;height:7.5px;background:#ecc47a"></div>
<div class="t" style="left:147.5px;top:419.5px;color:#d4dbe6;font-size:7.2px">TEX_AtsuyakiEgg</div>
<div class="b" style="left:131.5px;top:529px;width:8px;height:8px;background:#e9c172"></div>
<div class="t" style="left:140px;top:533px;color:#b4b4b4;font-size:7.1px">Assets/FBX/Texture/TEX_AtsuyakiEgg.png</div>
<div class="b" style="left:563px;top:532.5px;width:29px;height:1px;background:#666"></div>
<div class="b" style="left:561px;top:530.5px;width:5px;height:5px;border-radius:50%;background:#999"></div>

<!-- status -->
<div class="b" style="left:0;top:538px;width:1024px;height:12px;background:#191919"></div>
<svg style="left:971px;top:540px" width="50" height="9" viewBox="0 0 50 9" fill="#aaa"><path d="M2 1h4l2 3-1 4H3L1 5z"/><path d="M1 1l7 7" stroke="#191919" stroke-width=".8"/><rect x="16" y="1" width="6" height="2"/><rect x="16" y="3.5" width="6" height="2"/><rect x="16" y="6" width="6" height="2"/><path d="M30 1h5l1 3-2 4h-3l-2-4z"/><path d="M29 1l7 7" stroke="#191919" stroke-width=".8"/><circle cx="45.5" cy="4.500" r="3.300" fill="none" stroke="#aaa" stroke-width=".8"/><path d="M44 4.500l1.100 1.200 2-2.400" fill="none" stroke="#aaa" stroke-width=".8"/></svg>
</div></body></html>
